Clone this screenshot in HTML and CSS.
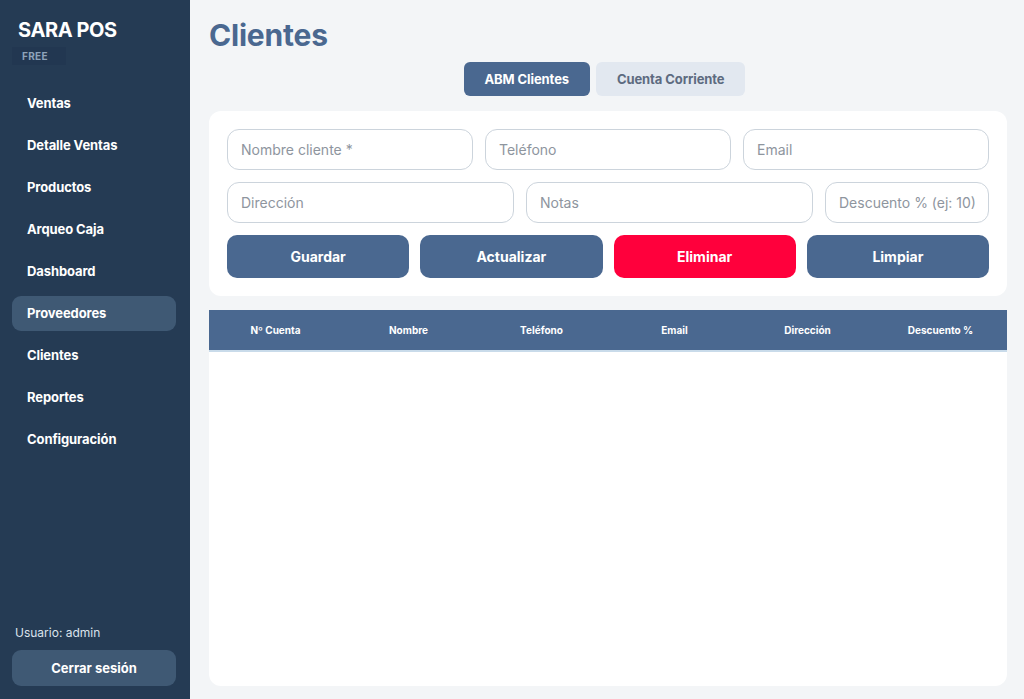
FILE: index.html
```html
<!DOCTYPE html>
<html lang="es">
<head>
  <meta charset="UTF-8">
  <meta name="viewport" content="width=device-width, initial-scale=1.0">
  <title>SARA POS - Clientes</title>
  <link rel="stylesheet" href="styles.css">
</head>
<body>
  <aside class="sidebar">
    <div class="brand">
      <h1>SARA POS</h1>
      <span class="plan">FREE</span>
    </div>
    <nav class="menu">
      <a href="#">Ventas</a>
      <a href="#">Detalle Ventas</a>
      <a href="#">Productos</a>
      <a href="#">Arqueo Caja</a>
      <a href="#">Dashboard</a>
      <a href="#" class="activo">Proveedores</a>
      <a href="#">Clientes</a>
      <a href="#">Reportes</a>
      <a href="#">Configuración</a>
    </nav>
    <div class="usuario">
      <p>Usuario: admin</p>
      <button class="salir">Cerrar sesión</button>
    </div>
  </aside>

  <main class="contenido">
    <h2 class="titulo">Clientes</h2>

    <div class="tabs">
      <button class="tab activo">ABM Clientes</button>
      <button class="tab">Cuenta Corriente</button>
    </div>

    <section class="tarjeta">
      <div class="fila tres">
        <input class="campo" type="text" placeholder="Nombre cliente *">
        <input class="campo" type="text" placeholder="Teléfono">
        <input class="campo" type="text" placeholder="Email">
      </div>
      <div class="fila dos">
        <input class="campo" type="text" placeholder="Dirección">
        <input class="campo" type="text" placeholder="Notas">
        <input class="campo" type="text" placeholder="Descuento % (ej: 10)">
      </div>
      <div class="fila botones">
        <button class="btn">Guardar</button>
        <button class="btn">Actualizar</button>
        <button class="btn rojo">Eliminar</button>
        <button class="btn">Limpiar</button>
      </div>
    </section>

    <section class="tabla">
      <table>
        <thead>
          <tr>
            <th>Nº Cuenta</th>
            <th>Nombre</th>
            <th>Teléfono</th>
            <th>Email</th>
            <th>Dirección</th>
            <th>Descuento %</th>
          </tr>
        </thead>
        <tbody></tbody>
      </table>
    </section>
  </main>
</body>
</html>
```

FILE: styles.css
```css
* {
  box-sizing: border-box;
}

body {
  margin: 0;
  padding: 0;
  height: 100vh;
  display: flex;
  font-family: 'Inter', 'Liberation Sans', sans-serif;
  background-color: #f3f5f7;
  overflow: hidden;
}

/* Barra lateral */
.sidebar {
  width: 190px;
  flex-shrink: 0;
  background-color: #253b54;
  color: #ffffff;
  display: flex;
  flex-direction: column;
  padding: 18px 14px 13px 12px;
}

.brand h1 {
  margin: 0 0 0 6px;
  font-size: 20px;
  font-weight: 700;
  line-height: 24px;
  letter-spacing: -0.4px;
}

.plan {
  display: inline-block;
  margin-top: 5px;
  padding: 4px 10px 3px 10px;
  background-color: #223751;
  color: #8ea3ba;
  font-size: 10px;
  font-weight: 700;
  letter-spacing: 0.3px;
  line-height: 11px;
  width: 54px;
}

.menu {
  margin-top: 21px;
  display: flex;
  flex-direction: column;
  gap: 7px;
}

.menu a {
  display: block;
  height: 35px;
  line-height: 35px;
  padding: 0 15px;
  color: #ffffff;
  text-decoration: none;
  font-size: 13px;
  font-weight: 700;
  letter-spacing: -0.1px;
  border-radius: 9px;
}

.menu a.activo {
  background-color: #3f5974;
}

.usuario {
  margin-top: auto;
}

.usuario p {
  margin: 0 0 10px 3px;
  font-size: 12px;
  color: #dbe3ec;
}

.salir {
  width: 100%;
  height: 36px;
  border: none;
  border-radius: 9px;
  background-color: #3f5974;
  color: #ffffff;
  font-family: inherit;
  font-size: 13px;
  font-weight: 700;
  cursor: pointer;
}

/* Contenido */
.contenido {
  flex: 1;
  display: flex;
  flex-direction: column;
  padding: 16px 17px 13px 19px;
}

.titulo {
  margin: 0;
  font-size: 30px;
  font-weight: 700;
  color: #4a6890;
  line-height: 38px;
  letter-spacing: -0.2px;
}

.tabs {
  display: flex;
  justify-content: center;
  gap: 6px;
  margin-top: 8px;
  padding-right: 7px;
}

.tab {
  height: 34px;
  padding: 0 21px;
  border: none;
  border-radius: 6px;
  background-color: #e2e8f0;
  color: #5d6b80;
  font-family: inherit;
  font-size: 13px;
  font-weight: 700;
  letter-spacing: -0.1px;
  cursor: pointer;
}

.tab.activo {
  background-color: #4a6890;
  color: #ffffff;
}

.tarjeta {
  margin-top: 15px;
  background-color: #ffffff;
  border-radius: 12px;
  padding: 18px;
  display: flex;
  flex-direction: column;
  gap: 12px;
}

.fila {
  display: grid;
  gap: 12px;
}

.fila.tres {
  grid-template-columns: 1fr 1fr 1fr;
}

.fila.dos {
  grid-template-columns: 1fr 1fr 164px;
}

.fila.botones {
  grid-template-columns: repeat(4, 1fr);
  gap: 11px;
}

.campo {
  height: 41px;
  padding: 0 13px;
  border: 1px solid #ccd4dc;
  border-radius: 12px;
  font-family: inherit;
  font-size: 14px;
  color: #334155;
  outline: 0;
  background: #ffffff;
}

.campo::placeholder {
  color: #8e959e;
}

.btn {
  height: 43px;
  border: none;
  border-radius: 10px;
  background-color: #4a6890;
  color: #ffffff;
  font-family: inherit;
  font-size: 14px;
  font-weight: 700;
  cursor: pointer;
}

.btn.rojo {
  background-color: #ff003c;
}

/* Tabla */
.tabla {
  flex: 1;
  margin-top: 14px;
  background-color: #ffffff;
  border-radius: 0 0 12px 12px;
  overflow: hidden;
}

.tabla table {
  width: 100%;
  border-collapse: collapse;
  table-layout: fixed;
}

.tabla th {
  height: 41px;
  background-color: #4a6890;
  color: #ffffff;
  font-size: 10px;
  font-weight: 700;
  text-align: center;
  border-bottom: 2px solid #c9dbea;
}
```
